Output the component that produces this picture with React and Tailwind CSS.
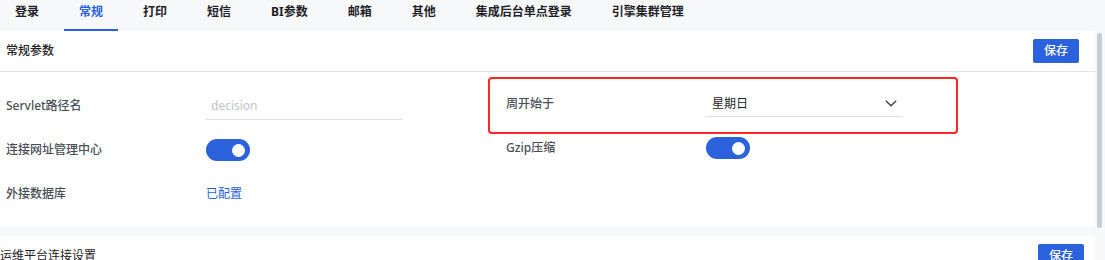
import React from "react";

const tabs = ["登录", "常规", "打印", "短信", "BI参数", "邮箱", "其他", "集成后台单点登录", "引擎集群管理"];

// Switch, always on in this view
const Toggle = () => (
  <div className="w-[44px] h-[22px] rounded-full bg-[#2b62dc] flex items-center justify-end pr-[5px]">
    <span className="w-[13px] h-[13px] rounded-full bg-white" />
  </div>
);

const Row = ({ label, children, className = "" }) => (
  <div className={`relative flex items-center h-[44px] ${className}`}>
    <div className="w-[200px] font-medium text-[#4a4f57]">{label}</div>
    {children}
  </div>
);

const SaveButton = () => (
  <button className="h-[24px] w-[46px] rounded-[2px] bg-[#2b62dc] text-white text-[12px] font-medium">保存</button>
);

export default function App() {
  return (
    <div className="w-[1105px] h-[260px] overflow-hidden bg-[#f7f8fa] text-[12px] font-['Noto_Sans','Noto_Sans_CJK_SC',sans-serif]">
      {/* Tabs */}
      <div className="flex gap-[10px] h-[31px]">
        {tabs.map((t) => (
          <div
            key={t}
            className={`relative px-[15px] pt-[4px] leading-[16px] font-bold ${
              t === "常规" ? "text-[#2b62dc]" : "text-[#1f2329]"
            }`}
          >
            {t}
            {t === "常规" && <span className="absolute left-0 right-0 bottom-0 h-[2px] bg-[#2b62dc]" />}
          </div>
        ))}
      </div>

      <div className="flex">
        <div className="w-[1095px]">
          {/* 常规参数 */}
          <section className="bg-white">
            <div className="h-[41px] flex items-center justify-between pl-[6px] pr-[16px] border-b border-[#e3e5e8]">
              <span className="font-medium text-[#1f2329]">常规参数</span>
              <SaveButton />
            </div>
            <div className="flex pb-[10px]">
              <div className="w-[506px] pl-[6px] pt-[12px]">
                <Row label="Servlet路径名">
                  <div className="w-[196px] h-[26px] mt-[1px] flex items-center pl-[5px] border-b border-[#dcdfe6] text-[#c0c4cc]">
                    decision
                  </div>
                </Row>
                <Row label="连接网址管理中心">
                  <Toggle />
                </Row>
                <Row label="外接数据库">
                  <span className="text-[#2b62dc]">已配置</span>
                </Row>
              </div>
              <div className="w-[500px] pt-[10px]">
                <Row label="周开始于">
                  <div className="w-[196px] h-[26px] flex items-center justify-between pl-[6px] pr-[5px] border-b border-[#dcdfe6] text-[#1f2329]">
                    <span>星期日</span>
                    <svg width="12" height="7" viewBox="0 0 12 7" fill="none">
                      <path d="M0.8 0.8 L6 5.8 L11.2 0.8" stroke="#3c4048" strokeWidth="1.3" />
                    </svg>
                  </div>
                  <div className="pointer-events-none absolute -left-[18px] -top-[5px] w-[470px] h-[57px] border-2 border-[#ff2626] rounded-[4px]" />
                </Row>
                <Row label="Gzip压缩">
                  <Toggle />
                </Row>
              </div>
            </div>
          </section>

          <div className="h-[10px]" />

          {/* 运维平台连接设置 */}
          <section className="bg-white">
            <div className="h-[40px] flex items-center justify-between pr-[11px]">
              <span className="text-[#1f2329]">运维平台连接设置</span>
              <SaveButton />
            </div>
          </section>
        </div>

        {/* scrollbar */}
        <div className="w-[10px] pl-[2px] pt-[2px]">
          <div className="w-[5px] h-[195px] rounded-full bg-[#c9cdd4]" />
        </div>
      </div>
    </div>
  );
}
